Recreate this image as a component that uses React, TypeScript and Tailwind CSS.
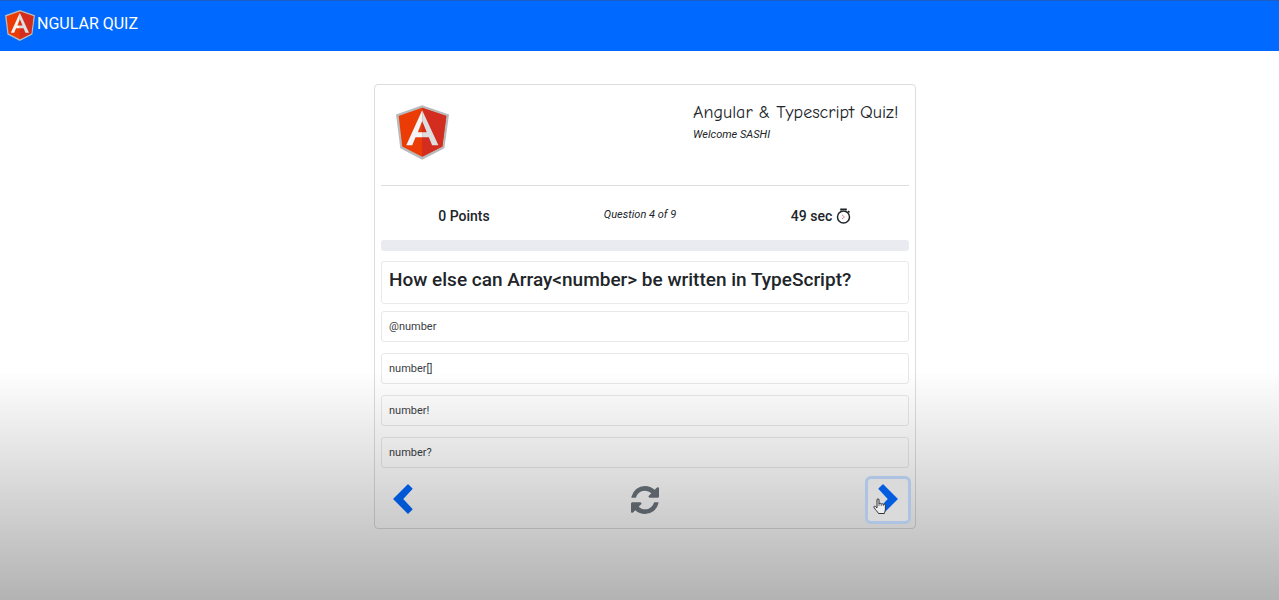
import { useState } from "react";

const options = ["@number", "number[]", "number!", "number?"];

function AngularLogo({ className }: { className: string }) {
  return (
    <svg className={className} viewBox="79 75 160 165" aria-hidden="true">
      <path d="M158 75 239 103 225 205 158 240 92 205 79 103Z" fill="#b8babd" />
      <path d="M158 83 231 108 219 200 158 231 98 200 87 108Z" fill="#ea3c04" />
      <path d="M158 83 231 108 219 200 158 231Z" fill="#d32d20" />
      <path d="M158 90 110 196H128L138 172H158V157H145L158 123Z" fill="#f5f5f5" />
      <path d="M158 90 207 196H188L178 172H158V157H172L158 123Z" fill="#dedede" />
    </svg>
  );
}

function Chevron({ className = "" }: { className?: string }) {
  return (
    <svg className={`h-[30px] w-5 ${className}`} viewBox="0 0 20 30" aria-hidden="true">
      <path
        d="M15 1 18.800 4.800 9.300 15 18.800 25.200 15 29 1 15Z"
        fill="currentColor"
        stroke="currentColor"
        strokeWidth="1.4"
        strokeLinejoin="round"
      />
    </svg>
  );
}

function Refresh() {
  return (
    <svg className="h-7 w-7" viewBox="0 128 1536 1536" fill="currentColor" aria-hidden="true">
      <path d="M1511 1056q0 5-1 7-64 268-268 434.500T764 1664q-146 0-282.500-55T238 1452l-129 129q-19 19-45 19t-45-19-19-45v-448q0-26 19-45t45-19h448q26 0 45 19t19 45-19 45l-137 137q71 66 161 102t187 36q134 0 250-65t186-179q11-17 53-117 8-23 30-23h192q13 0 22.500 9.500t9.500 22.500zm25-800v448q0 26-19 45t-45 19h-448q-26 0-45-19t-19-45 19-45l138-138Q969 384 768 384q-134 0-250 65T332 628q-11 17-53 117-8 23-30 23H50q-13 0-22.500-9.500T18 736v-7q65-268 270-434.500T768 128q146 0 284 55.500T1297 340l130-129q19-19 45-19t45 19 19 45z" />
    </svg>
  );
}

function Stopwatch() {
  return (
    <svg className="h-4 w-[15px]" viewBox="0 0 15 16" fill="none" aria-hidden="true">
      <circle cx="7.5" cy="9" r="6" stroke="#212529" strokeWidth="1.5" />
      <path d="M5 2.500V1.200h5v1.300M12 3l1.500 1.500" stroke="#212529" strokeWidth="1.600" />
      <path d="m6 7 2.500 2L6 11" stroke="#e08a9c" strokeWidth="1" />
    </svg>
  );
}

function HandCursor() {
  return (
    <svg
      className="pointer-events-none absolute top-[19px] left-[5px] h-[17px] w-[14px]"
      viewBox="0 0 14 17"
      aria-hidden="true"
    >
      <path
        d="M4 10V2C4 .3 6 .3 6 2v4c.3-1 2-1 2.200.2.400-.8 2-.6 2.200.4.500-.7 2-.4 2 .8V11c0 2-1 3-1 4.500H5.500C4.500 13.500 2.500 12 1 9.500.4 8.300 1.800 7.800 2.600 8.600Z"
        fill="#eeeeee"
        stroke="#303238"
        strokeWidth="1"
        strokeLinejoin="round"
      />
      <path d="M6 6v2M8.200 6.200V8M10.400 6.800V8" stroke="#303238" strokeWidth=".7" />
    </svg>
  );
}

export default function App() {
  const [selected, setSelected] = useState<string | null>(null);

  return (
    <div className="relative flex min-h-screen flex-col bg-white font-['Roboto',sans-serif] text-[#212529]">
      <header className="flex h-[51px] items-center border-t border-[#1c5fc4] bg-[#0069ff] px-[5px] pb-[2px]">
        <a href="#" className="flex items-center gap-[2px] text-base text-white">
          <AngularLogo className="h-[31px] w-[30px]" />
          <span className="pb-[2px]">NGULAR QUIZ</span>
        </a>
      </header>

      <main className="flex-1 pt-[33px] pb-6 pl-[11px]">
        <section className="mx-auto flex max-w-[542px] flex-col rounded border border-[#dcdddf] px-[6px] pb-1">
          <div className="flex h-[101px] items-start justify-between border-b border-[#dddee0] pr-[11px] pl-[15px]">
            <AngularLogo className="mt-5 h-[55px] w-[53px]" />
            <div className="mt-4 w-[205px]">
              <h1 className="text-lg leading-6 whitespace-nowrap font-['Comic_Neue','Comic_Sans_MS','Open_Sans',cursive]">
                Angular &amp; Typescript Quiz!
              </h1>
              <p className="text-[11px] leading-5 italic">Welcome SASHI</p>
            </div>
          </div>

          <div className="grid h-[54px] grid-cols-[166fr_186fr_176fr] items-center justify-items-center pt-[5px]">
            <span className="text-sm font-medium">0 Points</span>
            <span className="text-[11px] italic">Question 4 of 9</span>
            <span className="flex items-center gap-1 text-sm font-medium">
              49 sec <Stopwatch />
            </span>
          </div>

          <div
            role="progressbar"
            aria-label="Progress"
            aria-valuenow={0}
            className="h-[11px] rounded-[3px] bg-[#e9ebf0]"
          />

          <h2 className="mt-[10px] h-[43px] rounded-[3px] border border-[#e9eaec] px-[7px] pt-1 text-[19px] leading-7 font-medium">
            How else can Array&lt;number&gt; be written in TypeScript?
          </h2>

          <ol className="mt-[7px] flex flex-col gap-[11px]">
            {options.map((option) => (
              <li key={option}>
                <button
                  type="button"
                  aria-pressed={selected === option}
                  onClick={() => setSelected(option)}
                  className="block h-[31px] w-full rounded-[3px] border border-[#e7e8ea] px-[7px] pt-[2px] text-left text-[11px] text-[#3a3e42]"
                >
                  {option}
                </button>
              </li>
            ))}
          </ol>

          <footer className="-mr-[2px] mt-2 flex h-12 items-center justify-between">
            <button type="button" aria-label="Previous question" className="px-3 pb-[2px] text-[#0069ff]">
              <Chevron />
            </button>
            <button type="button" aria-label="Restart quiz" className="text-[#6c757d]">
              <Refresh />
            </button>
            <button
              type="button"
              aria-label="Next question"
              className="relative z-10 flex h-12 w-[46px] items-center justify-center rounded-md border-[3px] border-[#adc3e4] bg-[#dadada] pb-[3px] text-[#045cdf]"
            >
              <Chevron className="rotate-180" />
              <HandCursor />
            </button>
          </footer>
        </section>
      </main>

      <div className="pointer-events-none absolute inset-x-0 bottom-0 h-[230px] bg-linear-to-b from-black/0 to-black/30" />
    </div>
  );
}
